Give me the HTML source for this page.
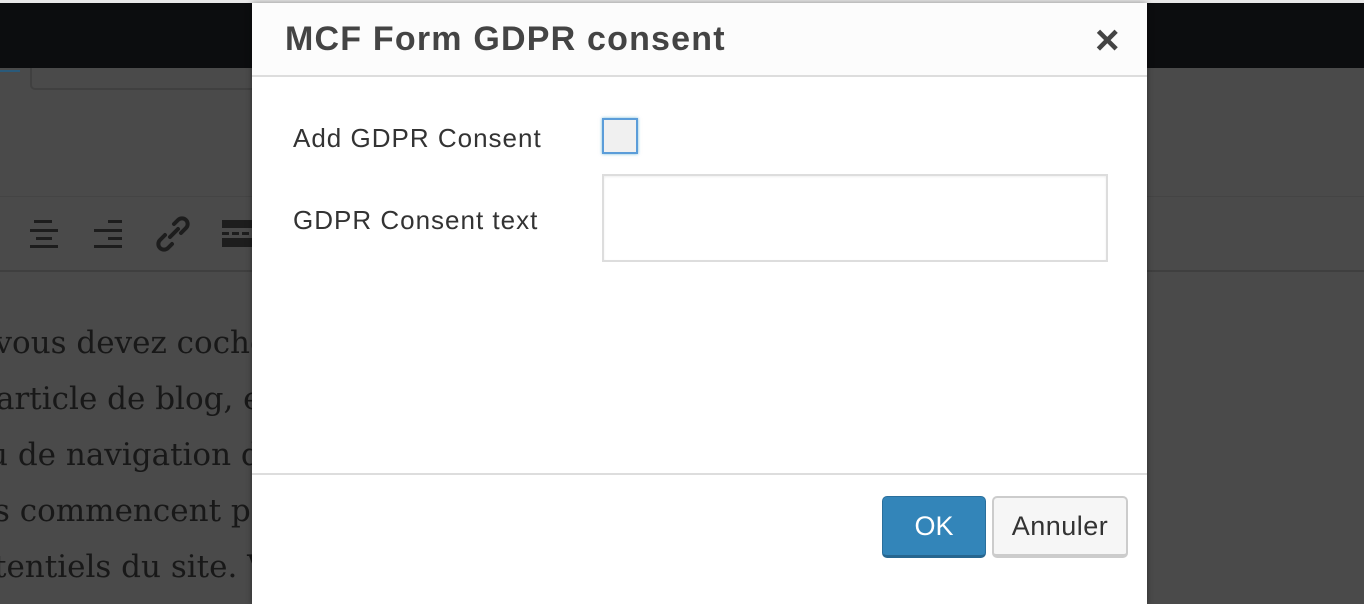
<!DOCTYPE html>
<html><head><meta charset="utf-8"><style>
body{margin:0;width:1364px;height:604px;overflow:hidden;position:relative;background:#4a4a4a;font-family:"Liberation Sans",sans-serif}
.abs{position:absolute}
.bg p{position:absolute;margin:0;font-family:"DejaVu Serif","Liberation Serif",serif;font-size:31px;color:#181818;white-space:nowrap}
.tb div{position:absolute;background:#1d1d1d}
</style></head><body>
<div class="abs" style="left:0;top:0;width:1364px;height:3px;background:#e8e8e8"></div>
<div class="abs" style="left:30px;top:58px;width:260px;height:28px;border:2px solid #404040;border-radius:5px;background:#4a4a4a"></div>
<div class="abs" style="left:0;top:70px;width:20px;height:2px;background:#2a5a7a"></div>
<div class="abs" style="left:0;top:3px;width:1364px;height:65px;background:#0c0d0f"></div>
<div class="abs" style="left:0;top:196px;width:1364px;height:1px;background:#444"></div>
<div class="abs" style="left:0;top:270px;width:1364px;height:2px;background:#3f3f3f"></div>
<div class="tb">
<div style="left:34px;top:220px;width:18px;height:3px"></div><div style="left:30px;top:229px;width:28px;height:3px"></div><div style="left:36px;top:237px;width:16px;height:3px"></div><div style="left:30px;top:245px;width:28px;height:3px"></div>
<div style="left:108px;top:220px;width:14px;height:3px"></div><div style="left:94px;top:229px;width:28px;height:3px"></div><div style="left:108px;top:237px;width:14px;height:3px"></div><div style="left:94px;top:245px;width:28px;height:3px"></div>
<div style="left:222px;top:220px;width:30px;height:8px"></div><div style="left:222px;top:232px;width:30px;height:3px;background:repeating-linear-gradient(90deg,#1d1d1d 0 7px,transparent 7px 10px)"></div><div style="left:222px;top:238px;width:30px;height:9px"></div>
</div>
<svg class="abs" style="left:155px;top:216px" width="36" height="36" viewBox="0 0 36 36"><g fill="none" stroke="#1d1d1d" stroke-width="4" stroke-linecap="round"><path d="M15 21 L23 13"/><path d="M19 8 l4-4 a5 5 0 0 1 8 8 l-5 5"/><path d="M17 28 l-4 4 a5 5 0 0 1 -8 -8 l5-5"/></g></svg>
<div class="bg">
<p style="left:-14px;top:325px">'vous devez cocher</p>
<p style="left:-4px;top:381px">article de blog, et</p>
<p style="left:-12px;top:437px">u de navigation de</p>
<p style="left:-6px;top:493px">s commencent par</p>
<p style="left:-6px;top:549px">tentiels du site. Vo</p>
</div>
<div class="abs" style="left:252px;top:3px;width:895px;height:601px;background:#fff;box-shadow:0 0 6px rgba(0,0,0,.4)">
<div class="abs" style="left:0;top:0;width:895px;height:72px;background:#fcfcfc;border-bottom:2px solid #dddddd"></div>
<div class="abs" style="left:33px;top:17px;font-size:34px;letter-spacing:1.2px;font-weight:bold;color:#444">MCF Form GDPR consent</div>
<div class="abs" style="left:843px;top:12px;font-size:42px;font-weight:bold;color:#444;line-height:50px">×</div>
<div class="abs" style="left:41px;top:120px;font-size:26px;letter-spacing:1px;color:#333">Add GDPR Consent</div>
<div class="abs" style="left:41px;top:202px;font-size:26px;letter-spacing:1px;color:#333">GDPR Consent text</div>
<div class="abs" style="left:350px;top:115px;width:32px;height:32px;border:2px solid #5b9dd9;background:#f0f0f0;box-shadow:0 0 3px rgba(30,140,190,.6)"></div>
<div class="abs" style="left:350px;top:171px;width:502px;height:84px;border:2px solid #ddd;box-shadow:inset 0 1px 2px rgba(0,0,0,.07)"></div>
<div class="abs" style="left:0;top:470px;width:895px;height:2px;background:#dddddd"></div>
<div class="abs" style="left:630px;top:493px;width:102px;height:58px;background:#3385b9;border:1px solid #2a6f9c;border-bottom:3px solid #27668f;border-radius:5px;color:#fff;font-size:27px;line-height:58px;text-align:center">OK</div>
<div class="abs" style="left:740px;top:493px;width:132px;height:56px;background:#f6f6f6;border:2px solid #ccc;border-bottom-width:4px;border-radius:5px;color:#333;font-size:27px;letter-spacing:0.5px;line-height:56px;text-align:center">Annuler</div>
</div>
</body></html>
